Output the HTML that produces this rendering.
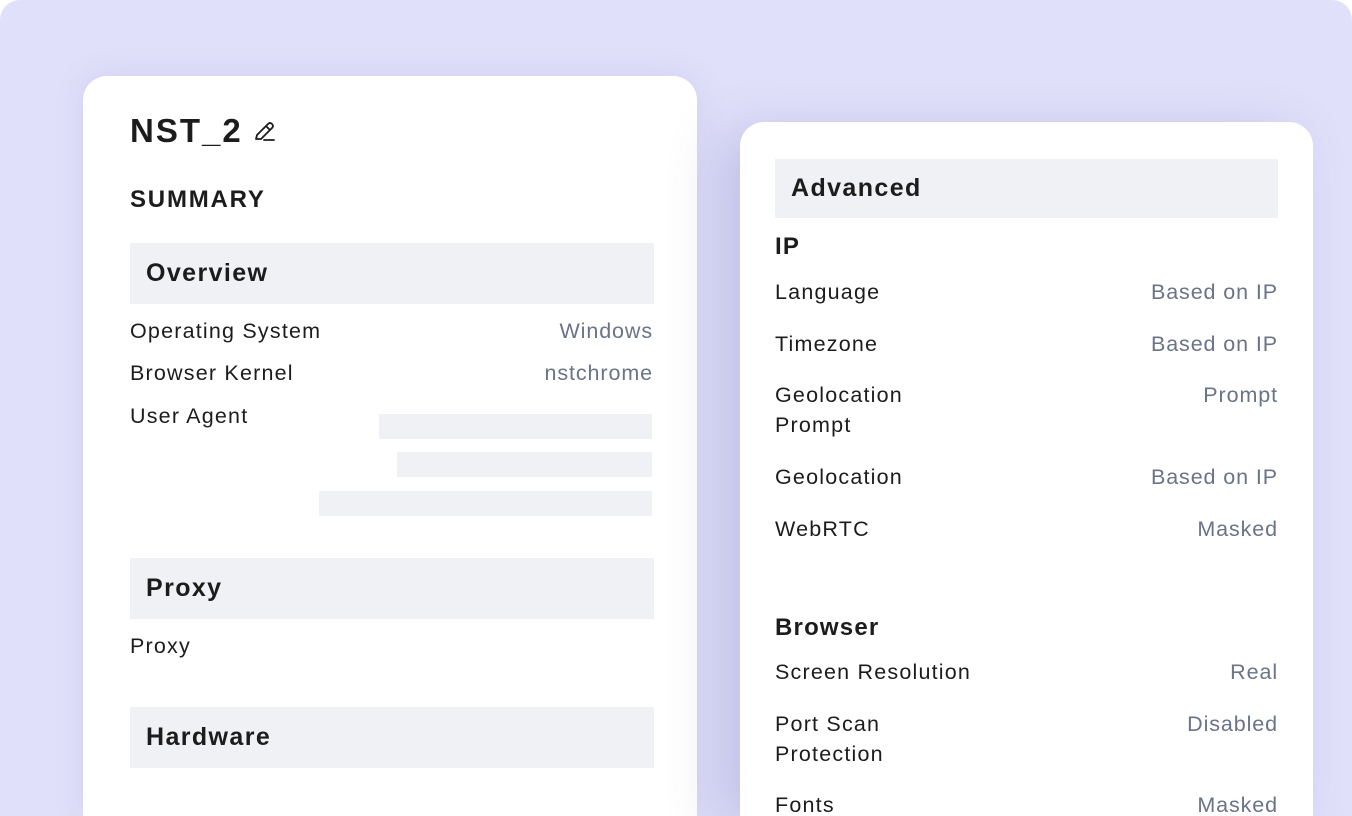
<!DOCTYPE html>
<html><head><style>
*{margin:0;padding:0;box-sizing:border-box}
html,body{width:1352px;height:816px;overflow:hidden}
body{background:#fff;font-family:"Liberation Sans",sans-serif;color:#1c1c1c;position:relative}
.bg{position:absolute;left:0;top:0;width:1352px;height:816px;background:#e0e0fa;border-radius:20px 20px 0 0;overflow:hidden}
.card{position:absolute;background:#fff;border-radius:24px}
.c1{left:83px;top:76px;width:614px;height:740px;border-radius:24px 24px 0 0;box-shadow:0 0 30px rgba(120,120,200,.15)}
.c2{left:740px;top:122px;width:573px;height:694px;border-radius:24px 24px 0 0;box-shadow:-20px 10px 50px rgba(100,100,170,.25)}
.hd{position:absolute;background:#f0f1f5;font-weight:bold;font-size:25px;padding-left:16px;display:flex;align-items:center;letter-spacing:1.4px}
.t{position:absolute;font-size:21.5px;color:#1c1c1c;line-height:30px;letter-spacing:1.2px;white-space:nowrap}
.v{position:absolute;font-size:21.5px;color:#6b7388;text-align:right;line-height:30px;letter-spacing:0.9px;white-space:nowrap}
.bar{position:absolute;background:#f0f1f5}
</style></head><body><div class="bg">
<div class="card c1">
<div style="position:absolute;left:47px;top:36px;font-size:33px;font-weight:bold;letter-spacing:2px">NST_2</div>
<svg style="position:absolute;left:170px;top:45px" width="24" height="22" viewBox="0 0 24 22"><path d="M3 18 L4 14 L15 3 Q17 1 19 3 Q21 5 19 7 L8 18 Z M13 5 L17 9 M11 19 L21 19" fill="none" stroke="#1c1c1c" stroke-width="1.8" stroke-linejoin="round" stroke-linecap="round"/></svg>
<div style="position:absolute;left:47px;top:110px;font-size:24px;font-weight:bold;letter-spacing:1.8px">SUMMARY</div>
<div class="hd" style="left:47px;top:167px;width:524px;height:61px">Overview</div>
<div class="t" style="left:47px;top:240px">Operating System</div><div class="v" style="right:44px;top:240px">Windows</div>
<div class="t" style="left:47px;top:282px">Browser Kernel</div><div class="v" style="right:44px;top:282px">nstchrome</div>
<div class="t" style="left:47px;top:325px">User Agent</div>
<div class="bar" style="left:296px;top:338px;width:273px;height:25px"></div>
<div class="bar" style="left:314px;top:376px;width:255px;height:25px"></div>
<div class="bar" style="left:236px;top:415px;width:333px;height:25px"></div>
<div class="hd" style="left:47px;top:482px;width:524px;height:61px">Proxy</div>
<div class="t" style="left:47px;top:555px">Proxy</div>
<div class="hd" style="left:47px;top:631px;width:524px;height:61px">Hardware</div>
</div>
<div class="card c2">
<div class="hd" style="left:35px;top:37px;width:503px;height:59px">Advanced</div>
<div class="t" style="left:35px;top:110px;font-size:24px;font-weight:bold">IP</div>
<div class="t" style="left:35px;top:155px">Language</div><div class="v" style="right:35px;top:155px">Based on IP</div>
<div class="t" style="left:35px;top:207px">Timezone</div><div class="v" style="right:35px;top:207px">Based on IP</div>
<div class="t" style="left:35px;top:258px">Geolocation<br>Prompt</div><div class="v" style="right:35px;top:258px">Prompt</div>
<div class="t" style="left:35px;top:340px">Geolocation</div><div class="v" style="right:35px;top:340px">Based on IP</div>
<div class="t" style="left:35px;top:392px">WebRTC</div><div class="v" style="right:35px;top:392px">Masked</div>
<div class="t" style="left:35px;top:491px;font-size:24px;font-weight:bold">Browser</div>
<div class="t" style="left:35px;top:535px">Screen Resolution</div><div class="v" style="right:35px;top:535px">Real</div>
<div class="t" style="left:35px;top:587px">Port Scan<br>Protection</div><div class="v" style="right:35px;top:587px">Disabled</div>
<div class="t" style="left:35px;top:668px">Fonts</div><div class="v" style="right:35px;top:668px">Masked</div>
</div>
</div></body></html>
